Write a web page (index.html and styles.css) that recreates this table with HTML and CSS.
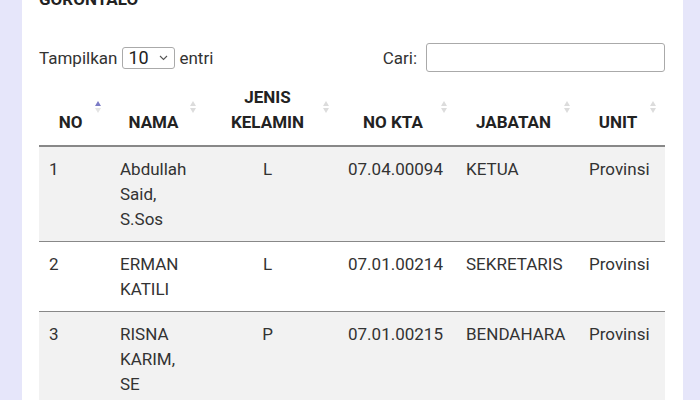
FILE: index.html
```html
<!DOCTYPE html>
<html lang="id">
<head>
<meta charset="utf-8">
<title>Pengurus Gorontalo</title>
<link rel="stylesheet" href="styles.css">
</head>
<body>
<main class="card">
  <h2 class="title">GORONTALO</h2>
  <div class="controls">
    <label class="length">Tampilkan
      <span class="select-box"><span>10</span>
        <svg class="chev" width="9" height="6" viewBox="0 0 9 6"><path d="M1 1l3.5 3.5L8 1" fill="none" stroke="#555" stroke-width="1.1"/></svg>
      </span>
      entri</label>
    <label class="search">Cari: <input type="text" class="search-input"></label>
  </div>
  <table class="dt">
    <colgroup>
      <col class="c1"><col class="c2"><col class="c3"><col class="c4"><col class="c5"><col class="c6">
    </colgroup>
    <thead>
      <tr>
        <th>NO<span class="sort asc"><i class="up"></i><i class="down"></i></span></th>
        <th>NAMA<span class="sort"><i class="up"></i><i class="down"></i></span></th>
        <th>JENIS<br>KELAMIN<span class="sort"><i class="up"></i><i class="down"></i></span></th>
        <th>NO KTA<span class="sort"><i class="up"></i><i class="down"></i></span></th>
        <th>JABATAN<span class="sort"><i class="up"></i><i class="down"></i></span></th>
        <th>UNIT<span class="sort"><i class="up"></i><i class="down"></i></span></th>
      </tr>
    </thead>
    <tbody>
      <tr class="odd">
        <td>1</td><td>Abdullah Said, S.Sos</td><td class="ctr">L</td><td>07.04.00094</td><td>KETUA</td><td>Provinsi</td>
      </tr>
      <tr>
        <td>2</td><td>ERMAN KATILI</td><td class="ctr">L</td><td>07.01.00214</td><td>SEKRETARIS</td><td>Provinsi</td>
      </tr>
      <tr class="odd">
        <td>3</td><td>RISNA KARIM, SE</td><td class="ctr">P</td><td>07.01.00215</td><td>BENDAHARA</td><td>Provinsi</td>
      </tr>
    </tbody>
  </table>
</main>
</body>
</html>
```
FILE: styles.css
```css
html, body {
  margin: 0;
  height: 100%;
  overflow: hidden;
}
body {
  background: #e6e6fa;
  padding: 0 17px 0 22px;
  font-family: Roboto, "Liberation Sans", Arial, sans-serif;
  font-size: 17px;
  color: #333;
  box-sizing: border-box;
}
.card {
  display: flow-root;
  background: #fff;
  min-height: 100%;
  padding: 0 18px 0 17px;
  box-sizing: border-box;
}
.title {
  margin: -13px 0 0;
  font-size: 17px;
  font-weight: 700;
  line-height: 25px;
  color: #222;
}
.controls {
  margin-top: 31px;
  display: flex;
  justify-content: space-between;
  align-items: center;
  height: 29px;
}
.length {
  display: flex;
  align-items: center;
  gap: 4px;
}
.select-box {
  display: inline-flex;
  align-items: center;
  justify-content: space-between;
  width: 53px;
  height: 22px;
  box-sizing: border-box;
  border: 1px solid #aaa;
  border-radius: 3px;
  padding: 0 6px 0 5px;
  margin-left: 1px;
  font-size: 18px;
  color: #222;
}
.chev { margin-top: 1px; }
.search {
  display: flex;
  align-items: center;
  gap: 9px;
}
.search-input {
  width: 239px;
  height: 29px;
  box-sizing: border-box;
  border: 1px solid #aaa;
  border-radius: 3px;
  margin: 0;
  padding: 0 5px;
}
.dt {
  margin-top: 3px;
  width: 626px;
  table-layout: fixed;
  border-collapse: collapse;
  line-height: 25px;
}
.c1 { width: 71px; }
.c2 { width: 95px; }
.c3 { width: 133px; }
.c4 { width: 118px; }
.c5 { width: 123px; }
.c6 { width: 86px; }
.dt th {
  position: relative;
  padding: 10px 18px 10px 10px;
  text-align: center;
  vertical-align: bottom;
  font-weight: 700;
  color: #222;
  border-bottom: 2px solid #888;
}
.dt td {
  padding: 10px 10px 9px;
  vertical-align: top;
  border-bottom: 1px solid #888;
}
.dt td.ctr { text-align: center; padding-right: 18px; }
.dt tr.odd td { background: #f2f2f2; }
.sort {
  position: absolute;
  right: 8px;
  top: 26px;
  width: 7px;
  display: flex;
  flex-direction: column;
  gap: 2px;
}
.sort i {
  display: block;
  width: 0;
  height: 0;
  border-left: 3.5px solid transparent;
  border-right: 3.5px solid transparent;
}
.sort .up { border-bottom: 5px solid #dcdcdc; }
.sort .down { border-top: 5px solid #dcdcdc; }
.sort.asc .up { border-bottom-color: #7b7bc6; }
.sort.asc .down { border-top-color: #e4e4e4; }
```
